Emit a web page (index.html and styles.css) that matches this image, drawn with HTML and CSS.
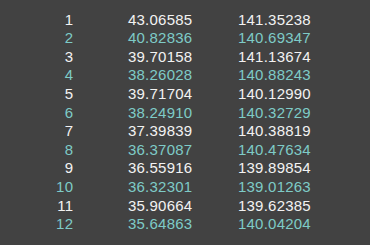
FILE: index.html
```html
<!DOCTYPE html>
<html>
<head>
<meta charset="utf-8">
<link rel="stylesheet" href="styles.css">
</head>
<body>
<div class="table">
  <div class="row"><span class="idx">1</span><span class="lat">43.06585</span><span class="lon">141.35238</span></div>
  <div class="row alt"><span class="idx">2</span><span class="lat">40.82836</span><span class="lon">140.69347</span></div>
  <div class="row"><span class="idx">3</span><span class="lat">39.70158</span><span class="lon">141.13674</span></div>
  <div class="row alt"><span class="idx">4</span><span class="lat">38.26028</span><span class="lon">140.88243</span></div>
  <div class="row"><span class="idx">5</span><span class="lat">39.71704</span><span class="lon">140.12990</span></div>
  <div class="row alt"><span class="idx">6</span><span class="lat">38.24910</span><span class="lon">140.32729</span></div>
  <div class="row"><span class="idx">7</span><span class="lat">37.39839</span><span class="lon">140.38819</span></div>
  <div class="row alt"><span class="idx">8</span><span class="lat">36.37087</span><span class="lon">140.47634</span></div>
  <div class="row"><span class="idx">9</span><span class="lat">36.55916</span><span class="lon">139.89854</span></div>
  <div class="row alt"><span class="idx">10</span><span class="lat">36.32301</span><span class="lon">139.01263</span></div>
  <div class="row"><span class="idx">11</span><span class="lat">35.90664</span><span class="lon">139.62385</span></div>
  <div class="row alt"><span class="idx">12</span><span class="lat">35.64863</span><span class="lon">140.04204</span></div>
</div>
</body>
</html>
```

FILE: styles.css
```css
html, body {
  margin: 0;
  padding: 0;
  background: #424242;
  width: 370px;
  height: 245px;
  overflow: hidden;
}
.table {
  padding-top: 10.7px;
  font-family: "Liberation Sans", Arial, sans-serif;
  font-size: 15px;
  line-height: 18.6px;
  letter-spacing: 0.22px;
  color: #f2f2f2;
}
.row {
  display: grid;
  grid-template-columns: 73px 165px auto;
}
.row.alt {
  color: #7ecbc7;
}
.idx {
  text-align: right;
  margin-right: -0.22px;
}
.lat {
  padding-left: 55px;
}
```
